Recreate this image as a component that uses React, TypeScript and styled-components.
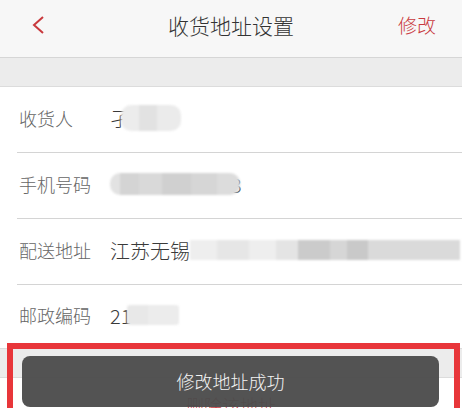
import React from "react";
import styled, { createGlobalStyle } from "styled-components";

const GlobalStyle = createGlobalStyle`
  html, body { margin: 0; padding: 0; background: #fff; }
  body { font-family: "Noto Sans CJK SC", "Noto Sans", sans-serif; font-weight: 300; }
`;

const Page = styled.div`
  position: relative;
  width: 462px;
  height: 408px;
  overflow: hidden;
  background: #fff;
`;

const Header = styled.header`
  height: 57px;
  background: #f7f7f7;
  border-bottom: 1px solid #d6d6d6;
  display: grid;
  grid-template-columns: 90px 1fr 90px;
  align-items: center;
`;

const Back = styled.div`
  padding-left: 31px;
  display: flex;
  align-items: center;
  height: 57px;
  margin-top: -8px;
`;

const Title = styled.h1`
  margin: 0;
  margin-top: -8px;
  text-align: center;
  font-size: 21px;
  font-weight: 300;
  color: #333;
`;

const Edit = styled.div`
  margin-top: -8px;
  text-align: right;
  padding-right: 26px;
  font-size: 19px;
  color: #c9393d;
`;

const Band = styled.div<{ $h: number }>`
  height: ${(p) => p.$h}px;
  background: #ececec;
  border-bottom: 1px solid #dcdcdc;
`;

const List = styled.div`
  background: #fff;
`;

const Row = styled.div<{ $last?: boolean; $h: number }>`
  height: ${(p) => p.$h}px;
  margin-left: 17px;
  padding-left: 2px;
  display: flex;
  align-items: center;
  padding-bottom: 3px;
  box-sizing: border-box;
  border-bottom: ${(p) => (p.$last ? "none" : "1px solid #d4d4d4")};
`;

const Label = styled.div`
  width: 91px;
  font-size: 18px;
  color: #666;
  flex-shrink: 0;
`;

const Value = styled.div`
  display: flex;
  align-items: center;
  font-size: 20px;
  color: #3a3a3a;
  white-space: nowrap;
`;

const Redact = styled.span<{ $w: number; $h: number; $bg: string; $r?: number; $ml?: number }>`
  display: inline-block;
  width: ${(p) => p.$w}px;
  height: ${(p) => p.$h}px;
  margin-left: ${(p) => p.$ml ?? 0}px;
  background: ${(p) => p.$bg};
  border-radius: ${(p) => p.$r ?? 4}px;
  filter: blur(1px);
`;

const Peek = styled.span`
  margin-left: -9px;
  font-size: 20px;
  color: #444;
`;

const GrayBand = styled.div`
  height: 28px;
  background: #ececec;
  border-top: 1px solid #dcdcdc;
  border-bottom: 1px solid #dcdcdc;
`;

const DeleteRow = styled.div`
  height: 40px;
  padding-top: 14px;
  text-align: center;
  font-size: 18px;
  color: #c9393d;
`;

const Annotation = styled.div`
  position: absolute;
  left: 7px;
  top: 343px;
  width: 441px;
  height: 80px;
  border: 6px solid #e8363a;
  pointer-events: none;
`;

const Toast = styled.div`
  position: absolute;
  left: 22px;
  top: 356px;
  width: 417px;
  height: 51px;
  border-radius: 8px;
  background: rgba(76, 76, 76, 0.96);
  color: #f4f4f4;
  font-size: 18px;
  display: flex;
  align-items: center;
  justify-content: center;
  padding-bottom: 2px;
  box-sizing: border-box;
`;

const nameBg = "linear-gradient(90deg,#ececec 0 30%,#e2e2e2 30% 60%,#ebebeb 60% 100%)";
const phoneBg =
  "linear-gradient(90deg,#e2e2e2 0 8%,#d4d4d4 8% 22%,#d9d9d9 22% 40%,#d0d0d0 40% 62%,#d6d6d6 62% 82%,#dcdcdc 82% 100%)";
const addrBg =
  "linear-gradient(90deg,#eeeeee 0 10%,#e6e6e6 10% 22%,#eeeeee 22% 32%,#e4e4e4 32% 40%,#cbcbcb 40% 52%,#d6d6d6 52% 58%,#c9c9c9 58% 66%,#dadada 66% 100%)";
const zipBg = "linear-gradient(90deg,#e8e8e8 0 40%,#ececec 40% 100%)";

export default function App() {
  return (
    <>
      <GlobalStyle />
      <Page>
        <Header>
          <Back>
            <svg width="14" height="20" viewBox="0 0 14 20">
              <polyline points="12,2 3,10 12,18" fill="none" stroke="#c9393d" strokeWidth="2" />
            </svg>
          </Back>
          <Title>收货地址设置</Title>
          <Edit>修改</Edit>
        </Header>
        <Band $h={28} />
        <List>
          <Row $h={66}>
            <Label>收货人</Label>
            <Value>
              孑
              <Redact $w={60} $h={26} $bg={nameBg} $r={10} $ml={-9} />
            </Value>
          </Row>
          <Row $h={66}>
            <Label>手机号码</Label>
            <Value>
              <Redact $w={130} $h={22} $bg={phoneBg} $r={10} />
              <Peek>3</Peek>
            </Value>
          </Row>
          <Row $h={66}>
            <Label>配送地址</Label>
            <Value>
              江苏无锡
              <Redact $w={270} $h={20} $bg={addrBg} $r={0} />
            </Value>
          </Row>
          <Row $h={63} $last>
            <Label>邮政编码</Label>
            <Value>
              21
              <Redact $w={52} $h={20} $bg={zipBg} $r={3} $ml={-4} />
            </Value>
          </Row>
        </List>
        <GrayBand />
        <DeleteRow>删除该地址</DeleteRow>
        <Annotation />
        <Toast>修改地址成功</Toast>
      </Page>
    </>
  );
}
